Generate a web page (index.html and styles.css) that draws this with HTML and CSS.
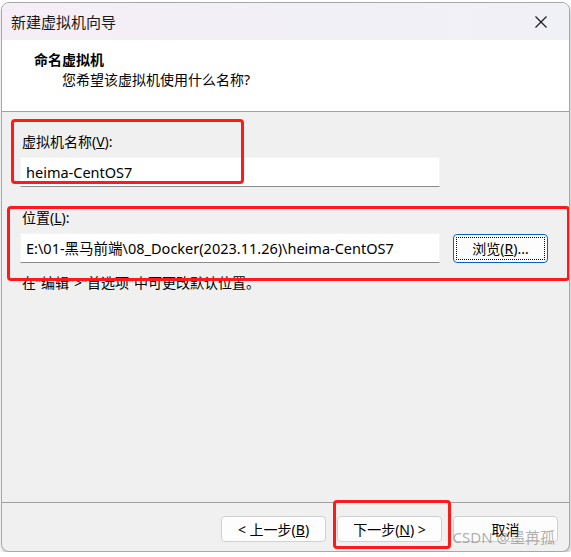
FILE: index.html
```html
<!DOCTYPE html>
<html lang="zh-CN">
<head>
  <meta charset="UTF-8">
  <title>新建虚拟机向导</title>
  <link rel="stylesheet" href="styles.css">
</head>
<body>
  <div class="window">
    <div class="titlebar">
      <span class="title">新建虚拟机向导</span>
      <svg class="close" width="12" height="12" viewBox="0 0 12 12">
        <path d="M0.5 0.5 L11.5 11.5 M11.5 0.5 L0.5 11.5" stroke="#1a1a1a" stroke-width="1.2" fill="none"/>
      </svg>
    </div>

    <div class="header">
      <div class="header-title">命名虚拟机</div>
      <div class="header-sub">您希望该虚拟机使用什么名称?</div>
    </div>

    <div class="content">
      <label class="field-label">虚拟机名称(<u>V</u>):</label>
      <div class="row">
        <div class="input">heima-CentOS7</div>
      </div>

      <label class="field-label second">位置(<u>L</u>):</label>
      <div class="row">
        <div class="input">E:\01-黑马前端\08_Docker(2023.11.26)\heima-CentOS7</div>
        <button class="btn browse"><span>浏览(<u>R</u>)...</span></button>
      </div>

      <p class="hint">在“编辑”&gt;“首选项”中可更改默认位置。</p>

      <div class="mark mark-name"></div>
      <div class="mark mark-location"></div>
    </div>

    <div class="footer">
      <button class="btn">&lt; 上一步(<u>B</u>)</button>
      <button class="btn next">下一步(<u>N</u>) &gt;</button>
      <button class="btn">取消</button>
      <div class="mark mark-next"></div>
      <span class="watermark">CSDN @墨苒孤</span>
    </div>
  </div>
</body>
</html>
```

FILE: styles.css
```css
body {
  margin: 0;
  background: #ffffff;
  font-family: "Noto Sans", "Noto Sans CJK SC", sans-serif;
  color: #000;
}
.window {
  width: 567px;
  height: 548px;
  margin: 2px 0 0 1px;
  border: 1px solid #a8a8a8;
  border-radius: 8px;
  overflow: hidden;
  background: #f0f0f0;
  box-shadow: 1px 3px 4px rgba(0, 0, 0, 0.25);
  display: flex;
  flex-direction: column;
}
.titlebar {
  height: 37px;
  display: flex;
  align-items: center;
  justify-content: space-between;
  padding: 0 22px 0 9px;
  background: linear-gradient(90deg, #f6eef6, #f1f0f6 60%, #f0f1f6);
}
.title {
  font-size: 15px;
  color: #1a1a1a;
}
.close {
  margin-top: 1px;
}
.header {
  height: 71px;
  background: #fff;
  border-bottom: 1px solid #a0a0a0;
  display: flex;
  flex-direction: column;
}
.header-title {
  font-weight: bold;
  font-size: 14px;
  margin: 10px 0 0 32px;
  line-height: 20px;
}
.header-sub {
  font-size: 14px;
  margin: 0 0 0 60px;
  line-height: 20px;
}
.content {
  position: relative;
  height: 390px;
  border-bottom: 1px solid #a0a0a0;
  padding: 0 0 0 18px;
  display: flex;
  flex-direction: column;
  font-size: 14px;
}
.field-label {
  margin-top: 20px;
  line-height: 20px;
  padding-left: 2px;
}
.field-label.second {
  margin-top: 21px;
}
.row {
  display: flex;
  align-items: center;
  margin-top: 5px;
}
.input {
  width: 420px;
  height: 30px;
  box-sizing: border-box;
  background: #fff;
  border: 1px solid #f4f4f4;
  border-bottom: 1px solid #8a8a8a;
  padding: 3px 0 0 5px;
  font-size: 14.5px;
  line-height: 22px;
  white-space: nowrap;
}
.btn {
  font-family: "Noto Sans", "Noto Sans CJK SC", sans-serif;
  font-size: 14px;
  color: #000;
  background: #fdfdfd;
  border: 1px solid #d0d0d0;
  border-radius: 4px;
  height: 26px;
  width: 105px;
  padding: 0;
}
.browse {
  width: 95px;
  height: 29px;
  margin-left: 13px;
  border: 1px solid #0067c0;
  padding: 2px;
}
.browse span {
  display: block;
  height: 100%;
  border: 1px dotted #000;
  box-sizing: border-box;
  line-height: 22px;
}
.hint {
  margin: 10px 0 0 2px;
  line-height: 20px;
}
.footer {
  position: relative;
  flex: 1;
  display: flex;
  justify-content: flex-end;
  gap: 11px;
  padding: 13px 11px 0 0;
}
.mark {
  position: absolute;
  border: 3px solid #ff1a1a;
  border-radius: 4px;
  box-sizing: border-box;
}
.mark-name {
  left: 9px;
  top: 7px;
  width: 233px;
  height: 65px;
}
.mark-location {
  left: 5px;
  top: 94px;
  width: 563px;
  height: 75px;
}
.mark-next {
  left: 331px;
  top: -3px;
  width: 118px;
  height: 49px;
}
.watermark {
  position: absolute;
  right: 14px;
  top: 25px;
  font-size: 15px;
  line-height: 18px;
  color: rgba(110, 110, 110, 0.55);
}
```
